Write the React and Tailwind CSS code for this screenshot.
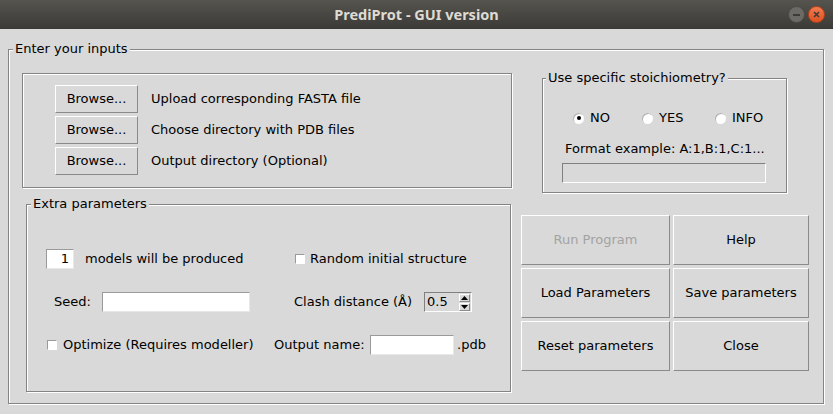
import React from "react";

const FONT = { fontFamily: '"DejaVu Sans", "Liberation Sans", sans-serif' };

const groove = "relative border border-[#848484] shadow-[inset_1px_1px_0_#fff,1px_1px_0_#fff]";
const raised = "flex items-center justify-center border border-t-white border-l-white border-b-[#8a8a8a] border-r-[#8a8a8a] bg-[#d9d9d9]";
const entry = "border border-t-[#9a9a9a] border-l-[#9a9a9a] border-b-[#e8e8e8] border-r-[#e8e8e8] bg-white";

function Frame({ label, labelLeft = "left-[4px]", className = "", children }) {
  return (
    <div className={`${groove} ${className}`}>
      {label && (
        <span className={`absolute top-[-9px] ${labelLeft} px-[2px] bg-[#d9d9d9] leading-[15px] whitespace-nowrap`}>
          {label}
        </span>
      )}
      {children}
    </div>
  );
}

function Check() {
  return <span className="inline-block shrink-0 w-[10px] h-[10px] bg-white border border-t-[#9a9a9a] border-l-[#9a9a9a] border-b-white border-r-white" />;
}

function Radio({ checked, label, width }) {
  return (
    <div className="flex items-center shrink-0" style={{ width }}>
      <span className="shrink-0 w-[11px] h-[11px] rounded-full bg-white shadow-[inset_1px_1px_0_#b0b0b0] flex items-center justify-center">
        {checked && <span className="w-[4px] h-[4px] rounded-full bg-black" />}
      </span>
      <span className="ml-[6px]">{label}</span>
    </div>
  );
}

function BrowseRow({ text }) {
  return (
    <div className="flex items-center">
      <button className={`${raised} w-[83px] h-[28px]`}>Browse...</button>
      <span className="ml-[13px]">{text}</span>
    </div>
  );
}

export default function App() {
  return (
    <div className="w-[833px] h-[414px] flex flex-col overflow-hidden text-[13px] text-black" style={FONT}>
      {/* Title bar */}
      <div className="h-[29px] shrink-0 flex items-center bg-gradient-to-b from-[#55544f] to-[#3b3a36]">
        <div className="w-[41px] ml-[4px]" />
        <div className="flex-1 text-center font-bold text-[14.5px] text-[#dfdbd2]" style={{ fontFamily: '"Noto Sans", "DejaVu Sans", sans-serif' }}>
          PrediProt - GUI version
        </div>
        <div className="w-[41px] flex items-center gap-[3px] mr-[4px]">
          <span className="w-[17px] h-[17px] rounded-full bg-[#6b6a65] border border-[#4a4945] flex items-center justify-center">
            <span className="w-[7px] h-[2px] bg-[#3c3b37]" />
          </span>
          <span className="w-[17px] h-[17px] rounded-full bg-gradient-to-b from-[#f27a4e] to-[#e0501d] border border-[#b8431a] flex items-center justify-center">
            <svg width="7" height="7" viewBox="0 0 7 7">
              <path d="M1 1L6 6M6 1L1 6" stroke="#3c3b37" strokeWidth="1.6" />
            </svg>
          </span>
        </div>
      </div>

      {/* Body */}
      <div className="flex-1 bg-[#d9d9d9] pt-[20px] pl-[8px]">
        <Frame label="Enter your inputs" className="w-[816px] h-[355px]">
          <div className="flex">
            {/* Left column */}
            <div className="ml-[13px] mt-[23px] w-[490px] flex flex-col">
              <Frame className="w-[490px] h-[115px]">
                <div className="pl-[32px] pt-[11px] flex flex-col gap-[3px]">
                  <BrowseRow text="Upload corresponding FASTA file" />
                  <BrowseRow text="Choose directory with PDB files" />
                  <BrowseRow text="Output directory (Optional)" />
                </div>
              </Frame>

              <Frame label="Extra parameters" className="ml-[4px] mt-[16px] w-[485px] h-[188px]">
                <div className="pt-[44px] flex flex-col gap-[23px]">
                  <div className="flex items-center h-[20px]">
                    <div className="w-[268px] flex items-center pl-[19px]">
                      <div className={`${entry} w-[28px] h-[20px] flex items-center justify-end pr-[4px]`}>1</div>
                      <span className="ml-[11px]">models will be produced</span>
                    </div>
                    <Check />
                    <span className="ml-[5px]">Random initial structure</span>
                  </div>

                  <div className="flex items-center h-[20px]">
                    <div className="w-[267px] flex items-center pl-[27px]">
                      <span className="w-[48px]">Seed:</span>
                      <div className={`${entry} w-[148px] h-[20px]`} />
                    </div>
                    <span className="w-[130px]">Clash distance (Å)</span>
                    <div className="w-[48px] h-[20px] flex border border-t-[#808080] border-l-[#808080] border-b-white border-r-white">
                      <span className="flex-1 pl-[2px] leading-[18px]">0.5</span>
                      <div className="w-[11px] flex flex-col justify-center mr-[1px] gap-[1px]">
                        <div className={`${raised} h-[8px]`}>
                          <svg width="7" height="4" viewBox="0 0 7 4"><path d="M3.5 0L7 4H0Z" fill="#000" /></svg>
                        </div>
                        <div className={`${raised} h-[8px]`}>
                          <svg width="7" height="4" viewBox="0 0 7 4"><path d="M0 0H7L3.5 4Z" fill="#000" /></svg>
                        </div>
                      </div>
                    </div>
                  </div>

                  <div className="flex items-center h-[20px]">
                    <div className="w-[247px] flex items-center pl-[20px]">
                      <Check />
                      <span className="ml-[6px]">Optimize (Requires modeller)</span>
                    </div>
                    <span className="w-[96px]">Output name:</span>
                    <div className={`${entry} w-[84px] h-[20px]`} />
                    <span className="ml-[3px]">.pdb</span>
                  </div>
                </div>
              </Frame>
            </div>

            {/* Right column */}
            <div className="ml-[9px] mt-[28px] flex flex-col">
              <Frame label="Use specific stoichiometry?" labelLeft="left-[3px]" className="ml-[21px] w-[245px] h-[115px]">
                <div className="flex flex-col">
                  <div className="flex items-center mt-[31px] pl-[30px] h-[16px]">
                    <Radio checked label="NO" width={69} />
                    <Radio label="YES" width={73} />
                    <Radio label="INFO" />
                  </div>
                  <div className="mt-[15px] pl-[22px] leading-[15px]">Format example: A:1,B:1,C:1...</div>
                  <div className="mt-[7px] ml-[19px] w-[204px] h-[20px] border border-t-[#808080] border-l-[#808080] border-b-white border-r-white bg-[#d9d9d9]" />
                </div>
              </Frame>

              <div className="mt-[22px] grid grid-cols-[149px_136px] auto-rows-[50px] gap-[3px]">
                <button className={`${raised} text-[#a3a3a3]`}>Run Program</button>
                <button className={raised}>Help</button>
                <button className={raised}>Load Parameters</button>
                <button className={raised}>Save parameters</button>
                <button className={raised}>Reset parameters</button>
                <button className={raised}>Close</button>
              </div>
            </div>
          </div>
        </Frame>
      </div>
    </div>
  );
}
